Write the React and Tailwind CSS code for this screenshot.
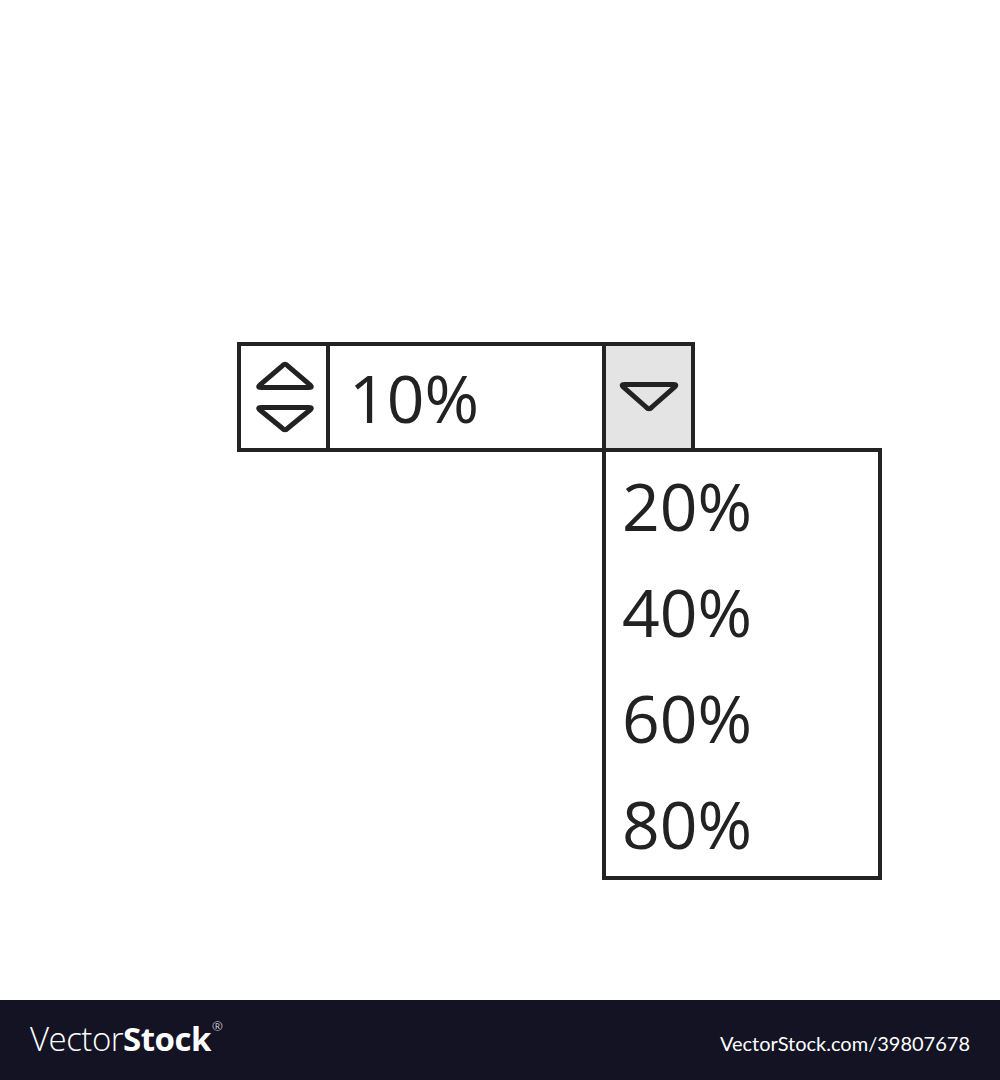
import React, { useState } from "react";

const options = ["20%", "40%", "60%", "80%"];

function SpinIcon() {
  return (
    <svg width="85" height="102" viewBox="0 0 85 102" fill="none" stroke="#222" strokeWidth="5" strokeLinejoin="round">
      <path d="M41 20.1 Q44 16.5 47 20.1 L69 38.9 Q72 41.5 68 41.5 L20 41.5 Q16 41.5 19 38.9 Z" />
      <path d="M41 82 Q44 85.5 47 82 L69 64 Q72 61.5 68 61.5 L20 61.5 Q16 61.5 19 64 Z" />
    </svg>
  );
}

function CaretIcon() {
  return (
    <svg width="85" height="102" viewBox="0 0 85 102" fill="none" stroke="#222" strokeWidth="5" strokeLinejoin="round">
      <path d="M18.5 38.5 L67.5 38.5 Q71.5 38.5 68.5 41.1 L46 61 Q43 64.5 40 61 L17.5 41.1 Q14.5 38.5 18.5 38.5 Z" />
    </svg>
  );
}

function PercentSelect() {
  const [value, setValue] = useState("10%");
  const [open, setOpen] = useState(true);

  return (
    <div className="relative w-[458px] font-['Open_Sans',sans-serif] text-[#222]">
      <div className="flex h-[110px] border-4 border-[#232323] bg-white">
        <div className="flex w-[89px] shrink-0 items-center justify-center border-r-4 border-[#232323]">
          <SpinIcon />
        </div>
        <div className="flex w-[272px] shrink-0 items-center pl-[19px] text-[66px] leading-none">
          {value}
        </div>
        <button
          onClick={() => setOpen(!open)}
          className="flex w-[89px] shrink-0 items-center justify-center border-l-4 border-[#232323] bg-[#e4e4e4]"
        >
          <CaretIcon />
        </button>
      </div>

      {open && (
        <ul className="absolute left-[365px] top-[106px] w-[280px] border-4 border-[#232323] bg-white">
          {options.map((opt) => (
            <li
              key={opt}
              onClick={() => {
                setValue(opt);
                setOpen(false);
              }}
              className="flex h-[106px] cursor-pointer items-center pl-4 text-[66px] leading-none"
            >
              {opt}
            </li>
          ))}
        </ul>
      )}
    </div>
  );
}

export default function App() {
  return (
    <div className="flex h-[1080px] w-[1000px] flex-col bg-white">
      <main className="h-[1000px] pl-[237px] pt-[342px]">
        <PercentSelect />
      </main>
      <footer className="flex h-[80px] items-baseline justify-between bg-[#131324] px-[30px] pt-[22px] text-white">
        <div className="flex items-start font-['Open_Sans',sans-serif] text-[33px] leading-none tracking-[-0.5px]">
          <span className="font-light">Vector</span>
          <span className="font-bold">Stock</span>
          <span className="ml-[1px] mt-[-2px] text-[13px] font-light">®</span>
        </div>
        <div className="font-['Lato',sans-serif] text-[20px] leading-none">VectorStock.com/39807678</div>
      </footer>
    </div>
  );
}
